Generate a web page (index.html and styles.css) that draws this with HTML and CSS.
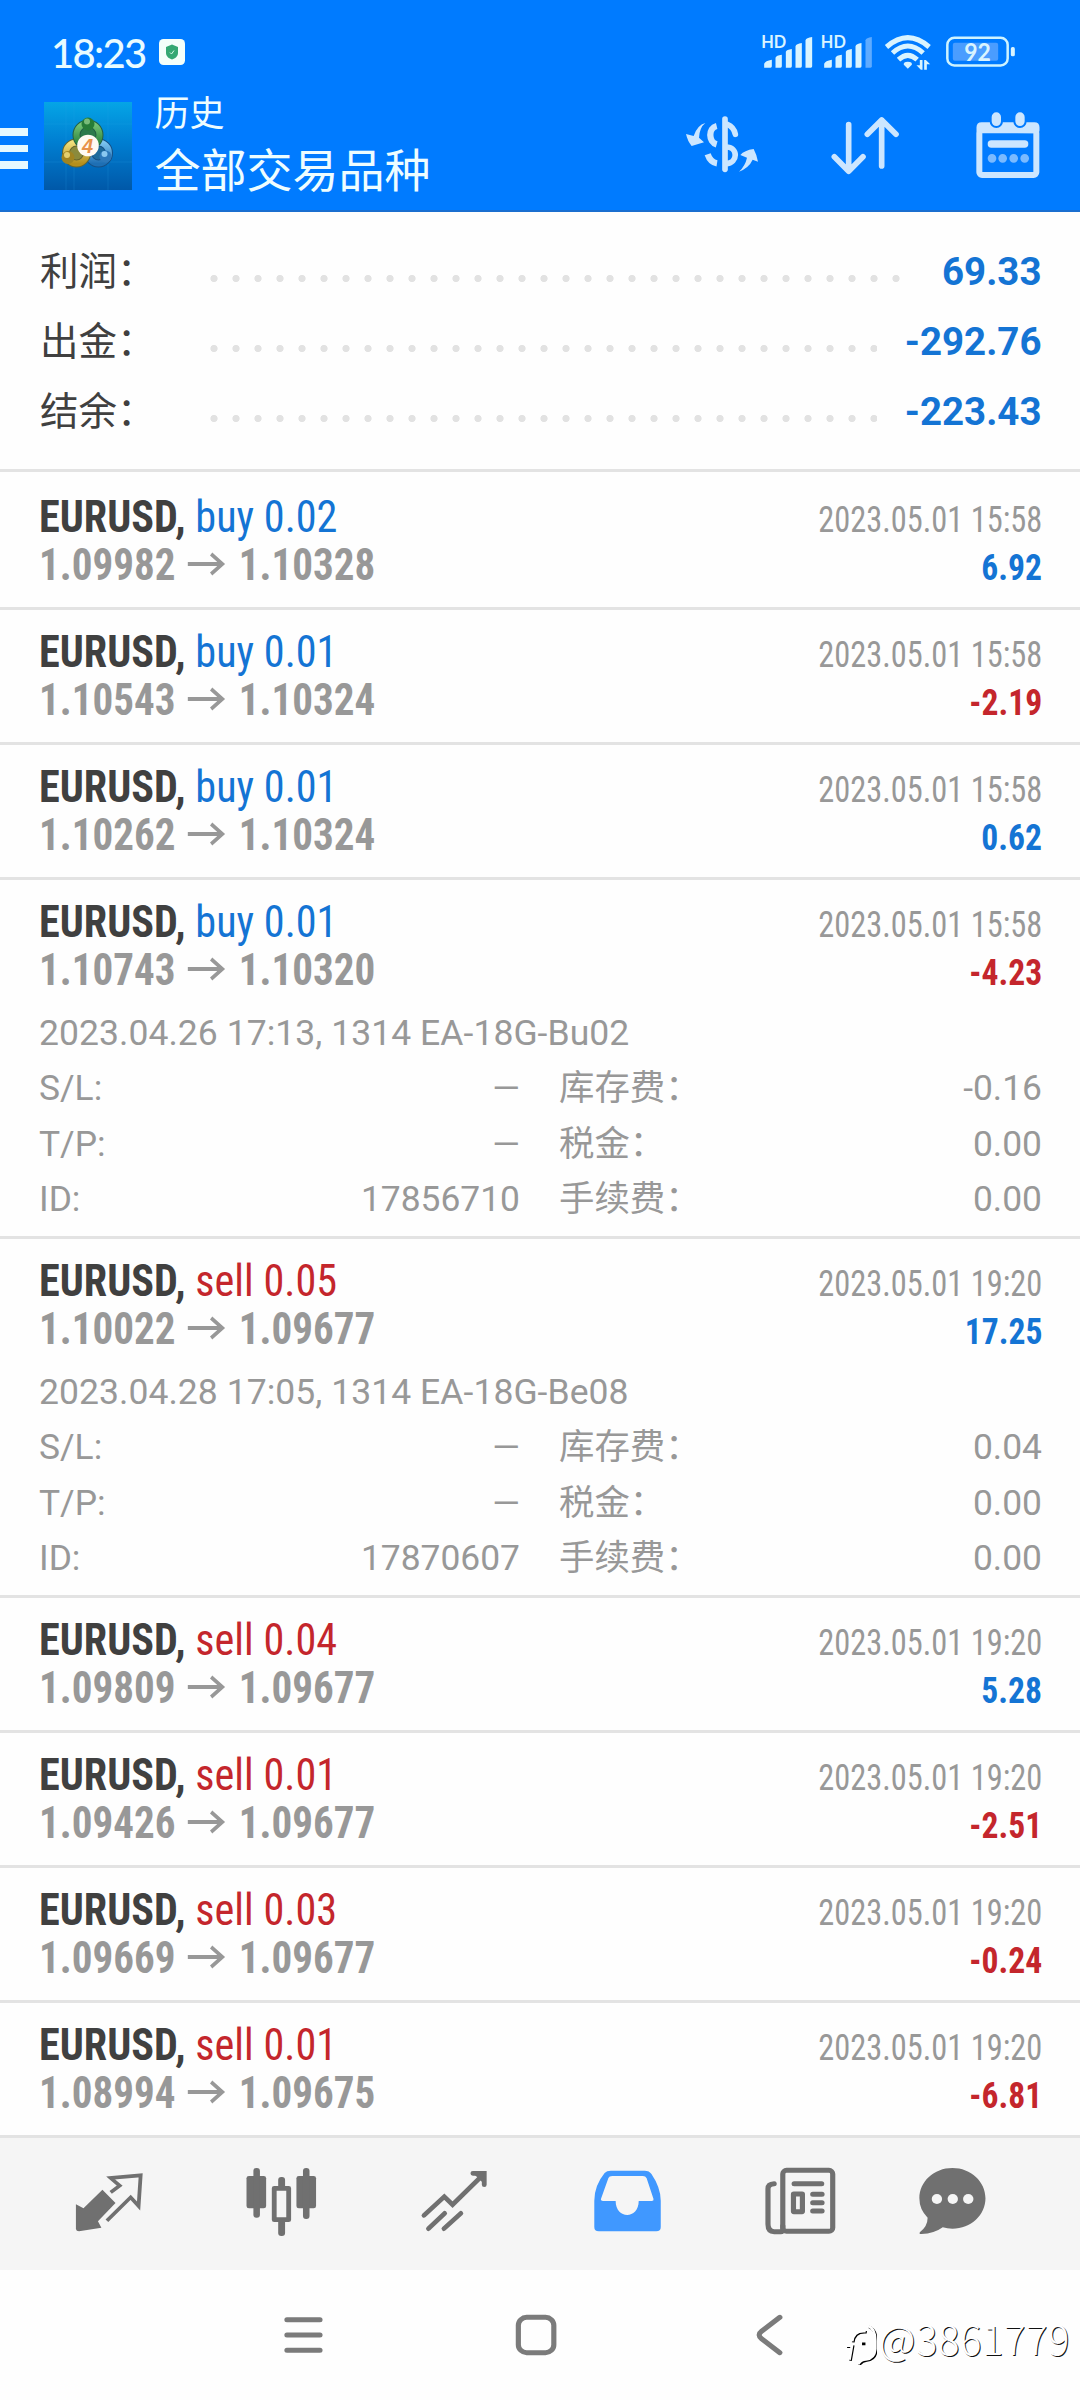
FILE: index.html
```
<!DOCTYPE html>
<html lang="zh-CN">
<head>
<meta charset="utf-8">
<title>历史</title>
<link rel="stylesheet" href="styles.css">
</head>
<body>
<div class="screen">
  <header class="top">
    <div class="status">
      <span class="clock">18:23</span>
      <svg class="shield" viewBox="0 0 26 26"><rect width="26" height="26" rx="4.500" fill="#f4fffa"/><path d="M13 5.500 19 8v6c0 3.500-3 5.500-6 6.500-3-1-6-3-6-6.500V8z" fill="#35a873"/><path d="m11 13.500 1.500 1.500 2.500-3.500" fill="none" stroke="#d8fbe8" stroke-width="1"/></svg>
      <svg class="signals" viewBox="360 100 770 120" fill="#d9f4ff">
        <g class="hd"><text x="363" y="145" textLength="75" lengthAdjust="spacingAndGlyphs">HD</text><text x="542" y="145" textLength="75" lengthAdjust="spacingAndGlyphs">HD</text></g>
        <path d="M372 204v-12q3-9 23-12v20q0 4-4 4zM406 204v-30q2-7 19-9v35q0 4-4 4zM437 204v-48q2-6 18-8v52q0 4-4 4zM466 204v-64q2-8 19-10v70q0 4-4 4zM496 204v-82q2-8 20-10v88q0 4-4 4z"/>
        <path d="M552 204v-12q3-9 23-12v20q0 4-4 4zM586 204v-30q2-7 19-9v35q0 4-4 4zM617 204v-48q2-6 18-8v52q0 4-4 4zM646 204v-64q2-8 18-10v70q0 4-4 4z"/>
        <path d="M676 204v-82q2-8 19-10v88q0 4-4 4z" fill="#5fabff"/>
        <g fill="none" stroke="#d9f4ff" stroke-width="15"><path d="M739 142q64-56 128 0M757 160q46-42 92 0M775 180q28-26 56 0"/></g>
        <path d="m803 207-12-12q-2-9 12-9t12 9z"/>
        <path d="M839 181h8v29h-5l-13-13h10zM852 210v-29h5l13 13h-10v16z"/>
        <rect x="921.500" y="114.500" width="181" height="83" rx="21" fill="none" stroke="#cdf3ff" stroke-width="7.500"/>
        <rect x="938" y="129" width="136" height="54" rx="6" fill="#4a9dff"/>
        <rect x="1112" y="142" width="12" height="28" rx="5"/>
        <text class="pct" x="972" y="183" textLength="80" lengthAdjust="spacingAndGlyphs">92</text>
      </svg>
    </div>
    <div class="bar">
      <div class="menu"><i></i><i></i><i></i></div>
      <svg class="logo" viewBox="0 0 88 88">
        <defs>
          <linearGradient id="bg" x2="0" y2="1"><stop offset="0" stop-color="#05a5e6"/><stop offset=".45" stop-color="#007fd2"/><stop offset="1" stop-color="#0058a8"/></linearGradient>
          <linearGradient id="gr" x2="0" y2="1"><stop stop-color="#79c678"/><stop offset="1" stop-color="#1f7a35"/></linearGradient>
          <linearGradient id="ye" x2="0" y2="1"><stop stop-color="#f1df7c"/><stop offset="1" stop-color="#b58f1c"/></linearGradient>
          <linearGradient id="bl" x2="0" y2="1"><stop stop-color="#7cc4ef"/><stop offset="1" stop-color="#1e6fb4"/></linearGradient>
        </defs>
        <rect width="88" height="88" fill="url(#bg)"/>
        <path d="M0 22h88M0 60h88M22 0v88M64 0v88M30 0v88" stroke="#2aa5e8" stroke-width=".5" opacity=".4"/>
        <circle cx="54.500" cy="51" r="10.500" fill="#1d6a9c" stroke="#155086" stroke-width="8"/>
        <circle cx="54.500" cy="51" r="10.500" fill="none" stroke="url(#bl)" stroke-width="6"/>
        <circle cx="32.500" cy="51" r="10.500" fill="#8a8a3c" stroke="#67662c" stroke-width="8"/>
        <circle cx="32.500" cy="51" r="10.500" fill="none" stroke="url(#ye)" stroke-width="6"/>
        <circle cx="44" cy="33" r="11.500" fill="#2d7a4c" stroke="#245f43" stroke-width="8"/>
        <circle cx="44" cy="33" r="11.500" fill="none" stroke="url(#gr)" stroke-width="6"/>
        <circle cx="44" cy="22" r="6.500" fill="#277c37"/><circle cx="43" cy="19.500" r="3" fill="#79bb78"/>
        <circle cx="24" cy="55.500" r="6.500" fill="#a08421"/><circle cx="23" cy="53" r="3" fill="#e3cf6e"/>
        <circle cx="61.500" cy="54.500" r="6" fill="#2c78ba"/><circle cx="60.500" cy="52" r="3" fill="#8ac8f0"/>
        <circle cx="44" cy="43.500" r="10.800" fill="#fffaf2"/>
        <text class="four" x="43.500" y="50.500" text-anchor="middle">4</text>
      </svg>
      <div class="titles"><span class="t1">历史</span><span class="t2">全部交易品种</span></div>
      <svg class="tools" viewBox="120 330 1110 210" fill="none" stroke="#cce6ff" stroke-width="17" stroke-linecap="round" stroke-linejoin="round">
        <path d="M255 357v151"/>
        <path d="M230 378c-26 6-25 48 0 55M203 463q8 24 28 27" stroke-linecap="butt" stroke-width="19"/>
        <path d="M262 373q20 8 24 30M258 441c37 0 37 48 0 50"/>
        <path d="M196 369q-24 6-35 39l-23-6q5 22 17 36l37-11-15-14q2-31 19-44zM297 515q19-18 24-42l-20-8q12-14 40-18 10 19 13 38l-16-6q-11 24-41 36z" fill="#cce6ff" stroke="none"/>
        <path d="M626 374v136M583 470l43 44 43-44M725 498V360M682 403l43-43 43 43"/>
        <rect x="1018" y="391" width="171" height="134" rx="8" stroke-width="18"/>
        <path d="M1018 390v-8q0-7 7-7h158q7 0 7 7v9z" fill="#cce6ff"/>
        <path d="M1069 351v13M1140 351v13" stroke="#007bff" stroke-width="40"/>
        <path d="M1069 351v13M1140 351v13" stroke-width="28"/>
        <path d="M1054 432h100" stroke-width="22"/>
        <path d="M1056 475h.1M1088 475h.1M1121 475h.1M1154 475h.1" stroke="#7abaff" stroke-width="26"/>
      </svg>
    </div>
  </header>

  <section class="summary">
    <div class="sum"><span>利润：</span><i></i><b>69.33</b></div>
    <div class="sum"><span>出金：</span><i></i><b>-292.76</b></div>
    <div class="sum"><span>结余：</span><i></i><b>-223.43</b></div>
  </section>

  <main class="deals">
    <article class="deal">
      <div class="line"><div class="sym"><b>EURUSD,</b> <span class="buy">buy 0.02</span></div><time>2023.05.01 15:58</time></div>
      <div class="line"><div class="px"><b>1.09982</b><svg class="arr" viewBox="0 0 40 24"><path d="M0 12h37M25 2l12 10-12 10"/></svg><b>1.10328</b></div><strong class="buy">6.92</strong></div>
    </article>
    <article class="deal">
      <div class="line"><div class="sym"><b>EURUSD,</b> <span class="buy">buy 0.01</span></div><time>2023.05.01 15:58</time></div>
      <div class="line"><div class="px"><b>1.10543</b><svg class="arr" viewBox="0 0 40 24"><path d="M0 12h37M25 2l12 10-12 10"/></svg><b>1.10324</b></div><strong class="sell">-2.19</strong></div>
    </article>
    <article class="deal">
      <div class="line"><div class="sym"><b>EURUSD,</b> <span class="buy">buy 0.01</span></div><time>2023.05.01 15:58</time></div>
      <div class="line"><div class="px"><b>1.10262</b><svg class="arr" viewBox="0 0 40 24"><path d="M0 12h37M25 2l12 10-12 10"/></svg><b>1.10324</b></div><strong class="buy">0.62</strong></div>
    </article>
    <article class="deal open">
      <div class="line"><div class="sym"><b>EURUSD,</b> <span class="buy">buy 0.01</span></div><time>2023.05.01 15:58</time></div>
      <div class="line"><div class="px"><b>1.10743</b><svg class="arr" viewBox="0 0 40 24"><path d="M0 12h37M25 2l12 10-12 10"/></svg><b>1.10320</b></div><strong class="sell">-4.23</strong></div>
      <div class="note">2023.04.26 17:13, 1314 EA-18G-Bu02</div>
      <div class="grid">
        <span>S/L:</span><span>—</span><span>库存费：</span><span>-0.16</span>
        <span>T/P:</span><span>—</span><span>税金：</span><span>0.00</span>
        <span>ID:</span><span>17856710</span><span>手续费：</span><span>0.00</span>
      </div>
    </article>
    <article class="deal open">
      <div class="line"><div class="sym"><b>EURUSD,</b> <span class="sell">sell 0.05</span></div><time>2023.05.01 19:20</time></div>
      <div class="line"><div class="px"><b>1.10022</b><svg class="arr" viewBox="0 0 40 24"><path d="M0 12h37M25 2l12 10-12 10"/></svg><b>1.09677</b></div><strong class="buy">17.25</strong></div>
      <div class="note">2023.04.28 17:05, 1314 EA-18G-Be08</div>
      <div class="grid">
        <span>S/L:</span><span>—</span><span>库存费：</span><span>0.04</span>
        <span>T/P:</span><span>—</span><span>税金：</span><span>0.00</span>
        <span>ID:</span><span>17870607</span><span>手续费：</span><span>0.00</span>
      </div>
    </article>
    <article class="deal">
      <div class="line"><div class="sym"><b>EURUSD,</b> <span class="sell">sell 0.04</span></div><time>2023.05.01 19:20</time></div>
      <div class="line"><div class="px"><b>1.09809</b><svg class="arr" viewBox="0 0 40 24"><path d="M0 12h37M25 2l12 10-12 10"/></svg><b>1.09677</b></div><strong class="buy">5.28</strong></div>
    </article>
    <article class="deal">
      <div class="line"><div class="sym"><b>EURUSD,</b> <span class="sell">sell 0.01</span></div><time>2023.05.01 19:20</time></div>
      <div class="line"><div class="px"><b>1.09426</b><svg class="arr" viewBox="0 0 40 24"><path d="M0 12h37M25 2l12 10-12 10"/></svg><b>1.09677</b></div><strong class="sell">-2.51</strong></div>
    </article>
    <article class="deal">
      <div class="line"><div class="sym"><b>EURUSD,</b> <span class="sell">sell 0.03</span></div><time>2023.05.01 19:20</time></div>
      <div class="line"><div class="px"><b>1.09669</b><svg class="arr" viewBox="0 0 40 24"><path d="M0 12h37M25 2l12 10-12 10"/></svg><b>1.09677</b></div><strong class="sell">-0.24</strong></div>
    </article>
    <article class="deal">
      <div class="line"><div class="sym"><b>EURUSD,</b> <span class="sell">sell 0.01</span></div><time>2023.05.01 19:20</time></div>
      <div class="line"><div class="px"><b>1.08994</b><svg class="arr" viewBox="0 0 40 24"><path d="M0 12h37M25 2l12 10-12 10"/></svg><b>1.09675</b></div><strong class="sell">-6.81</strong></div>
    </article>
  </main>

  <nav class="tabs">
    <svg viewBox="62.4 54 503 396" preserveAspectRatio="none"><path d="m296 209 38 40-51 55 10 19-65 11q-8 0-9-7v-74l22 12z" fill="#707070"/><path d="m320 217 26-20-26-23 87-8-6 92-23-26-69 70" fill="none" stroke="#707070" stroke-width="11"/></svg>
    <svg viewBox="565.4 54 503 396" preserveAspectRatio="none" fill="#707070"><rect x="715" y="168" width="57" height="97" rx="7"/><rect x="735" y="144" width="19" height="149" rx="9"/><rect x="860" y="168" width="57" height="97" rx="7"/><rect x="879" y="144" width="19" height="153" rx="9"/><rect x="807" y="171" width="20" height="40" rx="9"/><rect x="807" y="295" width="20" height="53" rx="9"/><rect x="795.500" y="205" width="42" height="94" fill="#f5f5f5" stroke="#707070" stroke-width="14" stroke-linejoin="round"/></svg>
    <svg viewBox="1068.4 54 503 396" preserveAspectRatio="none" fill="none" stroke="#707070" stroke-width="14" stroke-linecap="round"><path d="m1231 286 59-56 24 24 89-90M1373 160h33v34M1244 326l47-46M1289 326l49-46"/><path d="M1406 160l-28 4 24 24z" fill="#707070" stroke="none"/></svg>
    <svg viewBox="3.200 54 503 396" preserveAspectRatio="none"><path d="M206 152h98q14 0 20 10 27 41 27 80v79q0 13-13 13H171q-13 0-13-13v-79q0-45 30-83 6-7 18-7zM210 168q-9 0-11 6l-22 64q0 5 6 5h37c0 56 67 56 67 0h38q6 0 5-6l-20-62q-3-7-11-7z" fill="#4098ff" fill-rule="evenodd"/></svg>
    <svg viewBox="506.2 54 503 396" preserveAspectRatio="none" fill="none" stroke="#707070" stroke-width="15" stroke-linecap="round"><rect x="706" y="151" width="145" height="183" rx="11"/><path d="M706 318V330q0 5-6 5h-19q-18 0-18-22V206q0-14 18-15"/><path d="M739 191h80M793 223h27M793 248h27M793 273h27" stroke-width="15"/><rect x="737" y="222" width="26" height="53" rx="1"/></svg>
    <svg viewBox="1009 54 503 396" preserveAspectRatio="none"><path d="M1199 144c54 0 96 41 96 91s-42 91-96 91q-15 0-28-4-25 19-62 20-9 0-4-6 22-18 22-43-24-24-24-58c0-50 42-91 96-91z" fill="#707070"/><g fill="#f5f5f5"><circle cx="1154" cy="237" r="15"/><circle cx="1200" cy="237" r="15"/><circle cx="1245" cy="237" r="15"/></g></svg>
  </nav>
  <nav class="sys">
    <svg viewBox="542.8 450 676.600 390" preserveAspectRatio="none"><path d="M833 599h96M833 645h96M833 691h96"/></svg>
    <svg viewBox="1219.4 450 676.600 390" preserveAspectRatio="none"><rect x="1505" y="592" width="103" height="106" rx="24"/></svg>
    <svg viewBox="328.700 450 676.600 390" preserveAspectRatio="none"><path d="m697 592-53 42q-14 11 0 22l53 42"/></svg>
  </nav>
  <div class="mark"><svg viewBox="0 0 100 120"><path d="M22 108 30 62M12 66h14M30 54q4-34 40-30M56 58h10M76 8q22 8 22 44v24q-2 28-28 31-14 1-22 13" stroke="#000"/><path stroke="#fff" d="M19 105 27 59M9 63h14M27 51q4-34 40-30M73 5q22 8 22 44v24q-2 28-28 31-14 1-22 13"/></svg><span>@3861779</span></div>
</div>
</body>
</html>
```
FILE: styles.css
```
* { box-sizing: border-box; }
body { margin: 0; background: #fefefe; font-family: Roboto, "Noto Sans CJK SC", sans-serif; }
i { font-style: normal; }
svg { display: block; flex: none; }
.screen { position: relative; width: 1080px; height: 2400px; overflow: hidden; background: #fefefe; }

.top { height: 212px; background: #007bff; border-bottom: 2px solid #1a6fd0; color: #e8fbff; }
.status { display: flex; height: 96px; padding: 0 44px 0 51px; }
.clock { width: 108px; padding-top: 29px; font: 500 40px/48px Lato, sans-serif; letter-spacing: -1.700px; white-space: nowrap; }
.shield { width: 26px; height: 26px; margin-top: 39px; }
.signals { width: 257px; height: 40px; margin: 33px 19px 0 auto; }
.hd { font: 700 50px Lato, sans-serif; }
.pct { font: 700 74px Lato, sans-serif; }

.bar { display: flex; align-items: flex-start; height: 114px; }
.menu { display: grid; gap: 9px; width: 28px; margin-top: 32px; }
.menu i { height: 7.500px; background: #e6f9ff; }
.logo { width: 88px; height: 88px; margin: 6px 0 0 16px; }
.four { font: italic 700 20px "Liberation Sans", sans-serif; fill: #e8924a; }
.titles { display: flex; flex-direction: column; margin-left: 22.500px; color: #eefdff; }
.t1 { font-size: 35px; line-height: 40px; margin-top: -1px; }
.t2 { font-size: 46px; line-height: 56px; margin-top: 8px; }
.tools { width: 370px; height: 70px; margin: 14px 30px 0 auto; }

.summary { height: 260px; padding: 25px 38.500px 0 40px; border-bottom: 3px solid #e3e3e3; }
.sum { display: flex; height: 70px; line-height: 70px; color: #404040; font-size: 38.500px; }
.sum span { width: 162.500px; }
.sum i { flex: 1; height: 9px; margin: 37px 28px 0 0; background: radial-gradient(circle at 11px 4.500px, #e2e2e2 3.200px, transparent 4px) 0 0 / 22px 9px repeat-x; }
.sum b { color: #1474d4; }

.deals { padding-top: 3px; }
.deal { height: 135px; padding: 18px 38px 0 39px; border-bottom: 3px solid #e3e3e3; }
.deal.open { height: 359px; }
.line { display: flex; justify-content: space-between; align-items: baseline; height: 48px; line-height: 48px; font-family: "Roboto Condensed", Roboto, sans-serif; white-space: nowrap; }
.sym { font-size: 44px; color: #404040; transform: scaleX(.959); transform-origin: 0 0; }
.px { display: flex; align-items: baseline; font-size: 44px; color: #989898; transform: scaleX(.933); transform-origin: 0 0; }
.arr { width: 43px; height: 24px; margin: 0 13px 0 12px; transform: translateY(-4px); fill: none; stroke: #989898; stroke-width: 3.800; }
time { font-size: 36.500px; color: #989898; transform: scaleX(.888); transform-origin: 100% 0; }
strong { font-size: 36.500px; transform: scaleX(.92); transform-origin: 100% 0; }
.buy { color: #1474d4; }
.sell { color: #c4262c; }
.note { height: 56px; margin-top: 11px; line-height: 56px; font-size: 35.500px; letter-spacing: .05px; color: #989898; }
.grid { display: grid; grid-template-columns: 90px 391px 241px 281px; grid-auto-rows: 55.600px; line-height: 55.600px; font-size: 35.400px; color: #989898; }
.grid span:nth-child(even) { text-align: right; }
.grid span:nth-child(4n+3) { padding-left: 39px; }

.tabs { display: flex; height: 132px; padding-left: 21.500px; background: #f5f5f5; }
.tabs svg { width: 173.200px; height: 132px; }
.sys { display: flex; height: 130px; padding-left: 186.900px; fill: none; stroke: #7b7b7b; stroke-width: 15; stroke-linecap: round; }
.sys svg { width: 233px; height: 130px; }

.mark { position: absolute; left: 843px; top: 2308px; display: flex; color: #fff; font: 300 40px/60px "Noto Sans CJK SC", sans-serif; letter-spacing: .6px; text-shadow: 1px 1px 0 #111; white-space: nowrap; }
.mark svg { width: 34px; height: 41px; margin-top: 16px; fill: none; stroke-width: 8; }
.mark span { margin-left: 2px; }
```
